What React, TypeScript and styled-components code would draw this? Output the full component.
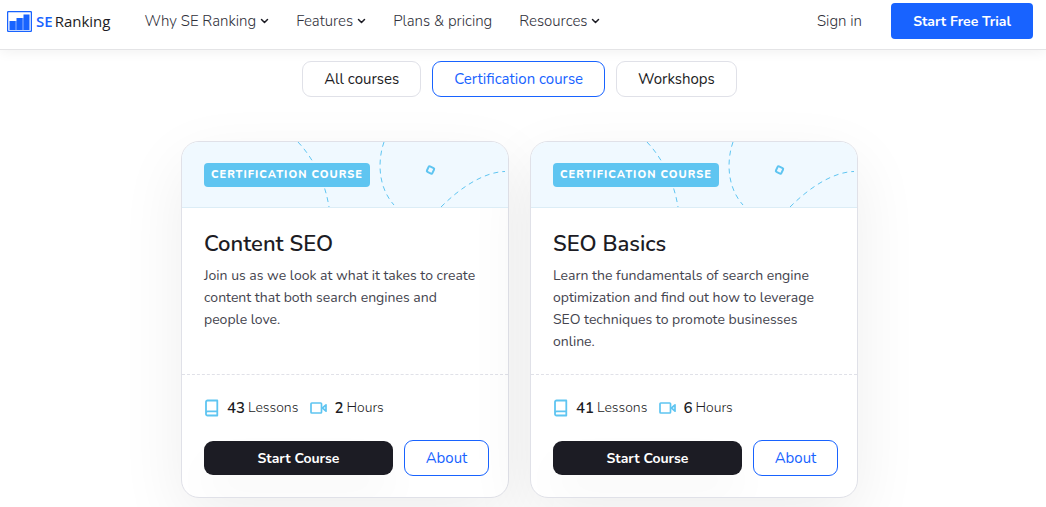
import React from "react";
import styled, { createGlobalStyle } from "styled-components";

const blue = "#1863ff";
const sky = "#5fc5f1";
const ink = "#1c1c24";
const line = "#e0e1e8";

const GlobalStyle = createGlobalStyle`
  *, *::before, *::after { box-sizing: border-box; }
  body {
    margin: 0;
    background: #fff;
    color: ${ink};
    font-family: Nunito, Lato, "Open Sans", sans-serif;
    font-size: 15px;
    overflow-x: hidden;
  }
  h2, p, ul { margin: 0; padding: 0; }
  button { font: inherit; cursor: pointer; }
  a { color: inherit; text-decoration: none; }
`;

const Header = styled.header`
  display: flex;
  align-items: flex-start;
  height: 50px;
  padding: 3px 13px 0 7px;
  border-bottom: 1px solid #e4e4e6;
  box-shadow: 0 2px 12px rgba(0, 0, 0, 0.06);
`;

const Logo = styled.a`
  display: flex;
  align-items: center;
  gap: 4px;
  height: 36px;
  margin-right: 34px;
  font-family: "Open Sans", sans-serif;
  font-size: 15px;
  font-weight: 500;
  color: ${ink};
`;

const LogoAccent = styled.span`
  margin-right: 2px;
  font-weight: 600;
  color: ${blue};
`;

const Nav = styled.nav`
  display: flex;
  align-items: center;
  gap: 27px;
  height: 36px;
`;

const NavLink = styled.a`
  display: flex;
  align-items: center;
  gap: 4px;
  line-height: 20px;
  font-weight: 300;
  color: #30303a;
  white-space: nowrap;
`;

const Account = styled.div`
  display: flex;
  align-items: center;
  gap: 29px;
  margin-left: auto;
`;

const TrialButton = styled.button`
  min-width: 142px;
  height: 36px;
  padding: 0 20px;
  border: 0;
  border-radius: 4px;
  background: ${blue};
  color: #fff;
  font-size: 14px;
  font-weight: 700;
  white-space: nowrap;
`;

const Main = styled.main`
  display: flex;
  flex-direction: column;
  align-items: center;
  gap: 44px;
  padding: 11px 7px 9px 0;
`;

const Filters = styled.div`
  display: flex;
  gap: 11px;
`;

const FilterButton = styled.button<{ $active?: boolean }>`
  height: 36px;
  padding: 0 21px;
  border: 1px solid ${(p) => (p.$active ? blue : line)};
  border-radius: 9px;
  background: #fff;
  color: ${(p) => (p.$active ? blue : ink)};
`;

const Cards = styled.div`
  display: grid;
  grid-template-columns: repeat(2, minmax(0, 328px));
  gap: 21px;
`;

const Card = styled.article`
  display: flex;
  flex-direction: column;
  border: 1px solid ${line};
  border-radius: 18px;
  background: #fff;
  box-shadow: 0 22px 66px rgba(0, 0, 0, 0.07);
  overflow: hidden;
`;

const CardTop = styled.div`
  position: relative;
  height: 66px;
  padding: 21px 22px;
  border-bottom: 1px solid #dcedf6;
  background: #f0f9ff;
`;

const Pattern = styled.svg`
  position: absolute;
  top: 0;
  right: 0;
`;

const Badge = styled.span`
  position: relative;
  display: inline-block;
  height: 24px;
  padding: 0 7px;
  border-radius: 4px;
  background: ${sky};
  color: #fff;
  font-size: 11px;
  font-weight: 800;
  line-height: 23px;
  letter-spacing: 1px;
  text-transform: uppercase;
`;

const CardBody = styled.div`
  flex: 1;
  padding: 22px 26px 21px 22px;
`;

const Title = styled.h2`
  margin-bottom: 7px;
  font-size: 22px;
  font-weight: 600;
  line-height: 28px;
`;

const Description = styled.p`
  font-size: 14px;
  line-height: 22px;
  color: #44444e;
`;

const CardFooter = styled.div`
  padding: 23px 19px 21px 22px;
  border-top: 1px dashed ${line};
`;

const Stats = styled.ul`
  display: flex;
  gap: 12px;
  margin-bottom: 22px;
  list-style: none;
`;

const Stat = styled.li`
  display: flex;
  align-items: center;
  line-height: 20px;
`;

const Count = styled.strong`
  margin: 0 3px 0 7px;
  font-weight: 600;
`;

const Unit = styled.span`
  font-size: 14px;
  font-weight: 300;
`;

const Actions = styled.div`
  display: flex;
  align-items: center;
  gap: 11px;
`;

const StartButton = styled.button`
  flex: 1;
  height: 34px;
  border: 0;
  border-radius: 9px;
  background: ${ink};
  box-shadow: 0 22px 44px rgba(0, 0, 0, 0.03);
  color: #fff;
  font-size: 14px;
  font-weight: 700;
`;

const AboutButton = styled.button`
  width: 85px;
  height: 36px;
  border: 1px solid ${blue};
  border-radius: 9px;
  background: #fff;
  color: ${blue};
`;

const Chevron = () => (
  <svg width="9" height="6" viewBox="0 0 9 6" fill="none" stroke={ink} strokeWidth="1.5" strokeLinecap="round" strokeLinejoin="round" aria-hidden="true">
    <path d="M1.5 1.5 4.500 4.500 7.500 1.500" />
  </svg>
);

const LogoMark = () => (
  <svg width="25" height="21" viewBox="0 0 25 21" aria-hidden="true">
    <rect x=".6" y=".6" width="23.8" height="19.8" rx="1" fill="#fff" stroke={blue} strokeWidth="1.3" />
    <path fill="#8db1ff" d="M8 10h2v9H8zM15 7h2v12h-2z" />
    <path fill={blue} d="M2.500 10h6v9h-6zM9.500 7h6v12h-6zM16.500 3.500h6V19h-6z" />
  </svg>
);

const BookIcon = () => (
  <svg width="16" height="18" viewBox="0 0 16 18" fill="none" stroke={sky} strokeWidth="1.8" strokeLinejoin="round" aria-hidden="true">
    <path d="M3.500 1.500h9.800v15H3.500A1.500 1.500 0 0 1 2 15V3a1.500 1.500 0 0 1 1.500-1.500ZM2 14a1.600 1.600 0 0 1 1.500-1.600h9.800" />
  </svg>
);

const VideoIcon = () => (
  <svg width="17" height="14" viewBox="0 0 17 14" fill="none" stroke={sky} strokeWidth="1.7" strokeLinejoin="round" aria-hidden="true">
    <rect x="1" y="2" width="10.500" height="10" rx=".8" />
    <path d="M12.500 7 16 3.800v6.400Z" />
  </svg>
);

const CardPattern = () => (
  <Pattern width="326" height="65" viewBox="0 0 326 65" fill="none" stroke={sky} strokeDasharray="5 4" aria-hidden="true">
    <path d="M116 0C132 17 143 40 147 65" />
    <path d="M202 0C196 17 195 44 212 63" />
    <path d="M259 65C280 44 303 30 323 29.500" />
    <rect x="245.500" y="25" width="6" height="6" rx="1" transform="rotate(25 248.500 28)" strokeWidth="2" strokeDasharray="none" />
  </Pattern>
);

type Course = { title: string; text: string; lessons: number; hours: number };

const courses: Course[] = [
  {
    title: "Content SEO",
    text: "Join us as we look at what it takes to create content that both search engines and people love.",
    lessons: 43,
    hours: 2,
  },
  {
    title: "SEO Basics",
    text: "Learn the fundamentals of search engine optimization and find out how to leverage SEO techniques to promote businesses online.",
    lessons: 41,
    hours: 6,
  },
];

const CourseCard = ({ course }: { course: Course }) => (
  <Card>
    <CardTop>
      <CardPattern />
      <Badge>Certification course</Badge>
    </CardTop>
    <CardBody>
      <Title>{course.title}</Title>
      <Description>{course.text}</Description>
    </CardBody>
    <CardFooter>
      <Stats>
        <Stat>
          <BookIcon />
          <Count>{course.lessons}</Count>
          <Unit>Lessons</Unit>
        </Stat>
        <Stat>
          <VideoIcon />
          <Count>{course.hours}</Count>
          <Unit>Hours</Unit>
        </Stat>
      </Stats>
      <Actions>
        <StartButton>Start Course</StartButton>
        <AboutButton>About</AboutButton>
      </Actions>
    </CardFooter>
  </Card>
);

export default function App() {
  return (
    <>
      <GlobalStyle />
      <Header>
        <Logo href="#">
          <LogoMark />
          <span><LogoAccent>SE</LogoAccent>Ranking</span>
        </Logo>
        <Nav>
          <NavLink href="#">Why SE Ranking <Chevron /></NavLink>
          <NavLink href="#">Features <Chevron /></NavLink>
          <NavLink href="#">Plans &amp; pricing</NavLink>
          <NavLink href="#">Resources <Chevron /></NavLink>
        </Nav>
        <Account>
          <NavLink href="#">Sign in</NavLink>
          <TrialButton>Start Free Trial</TrialButton>
        </Account>
      </Header>
      <Main>
        <Filters>
          <FilterButton>All courses</FilterButton>
          <FilterButton $active>Certification course</FilterButton>
          <FilterButton>Workshops</FilterButton>
        </Filters>
        <Cards>
          {courses.map((course) => (
            <CourseCard key={course.title} course={course} />
          ))}
        </Cards>
      </Main>
    </>
  );
}
